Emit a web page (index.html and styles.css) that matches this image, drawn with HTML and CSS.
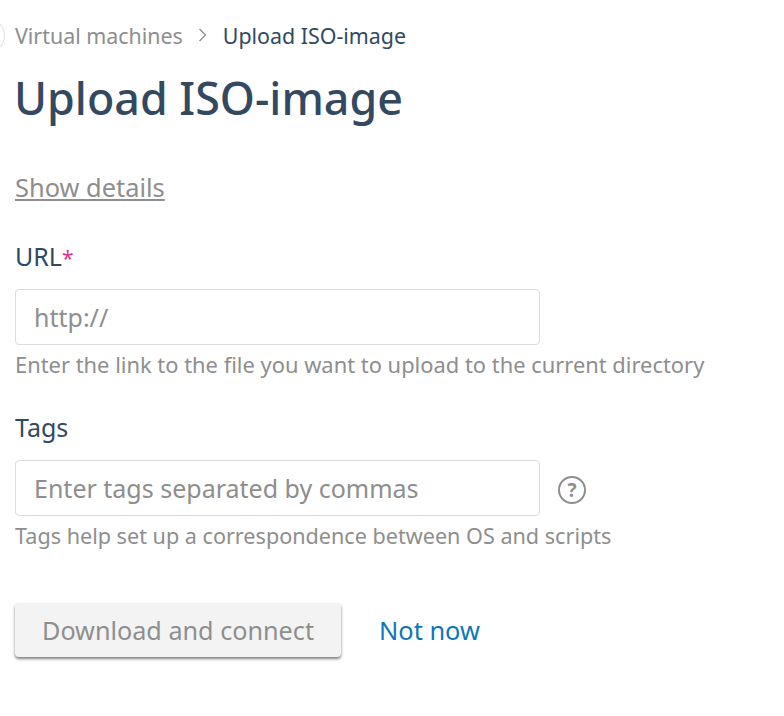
FILE: index.html
```html
<!DOCTYPE html>
<html>
<head>
<meta charset="UTF-8">
<link rel="stylesheet" href="styles.css">
</head>
<body>
<div class="back"></div>
<div class="crumbs">
  <span class="crumb-link">Virtual machines</span>
  <svg class="crumb-arrow" width="10" height="16" viewBox="0 0 10 16"><path d="M1.5 2l6 6-6 6" fill="none" stroke="#8e8e8e" stroke-width="1.3"/></svg>
  <span class="crumb-current">Upload ISO-image</span>
</div>
<h1 class="title">Upload ISO-image</h1>
<a class="details">Show details</a>
<form class="form">
  <div class="field field-url">
    <label class="label">URL<span class="req">*</span></label>
    <input class="input" type="text" placeholder="http://">
    <div class="hint">Enter the link to the file you want to upload to the current directory</div>
  </div>
  <div class="field field-tags">
    <label class="label">Tags</label>
    <div class="input-row">
      <input class="input" type="text" placeholder="Enter tags separated by commas">
      <svg class="help" width="30" height="30" viewBox="0 0 30 30"><circle cx="15" cy="15" r="13" fill="none" stroke="#8e8e8e" stroke-width="2"/><text x="15" y="21.5" text-anchor="middle" class="help-mark">?</text></svg>
    </div>
    <div class="hint hint-tags">Tags help set up a correspondence between OS and scripts</div>
  </div>
  <div class="actions">
    <button class="btn" type="button">Download and connect</button>
    <a class="later">Not now</a>
  </div>
</form>
</body>
</html>
```
FILE: styles.css
```css
html,body{height:100%}
body{margin:0;padding:0 0 0 15px;background:#fff;font-family:"Noto Sans",sans-serif;color:#2f4a62}
.back{position:absolute;left:-30px;top:18px;width:33px;height:33px;border:1px solid #dedede;border-radius:50%}
.crumbs{display:flex;align-items:center;height:24px;padding-top:23px;font-size:21.4px}
.crumb-link{color:#8e8e8e}
.crumb-arrow{margin:0 15px 0 15px}
.crumb-current{color:#2f4a62}
.title{margin:23px 0 0 -1px;height:56px;line-height:56px;font-size:44.8px;font-weight:500;color:#33495f}
.details{display:inline-block;margin-top:48px;height:26px;line-height:26px;font-size:25.4px;color:#8e8e8e;text-decoration:underline}
.form{display:block}
.field-url{margin-top:39px}
.field-tags{margin-top:34px}
.label{display:block;height:30px;line-height:30px;font-size:25px;color:#2f4a62}
.req{color:#d6368c;font-size:21px}
.input{display:block;box-sizing:border-box;width:525px;height:56px;margin-top:18px;padding:0 18px;border:1px solid #dcdcdc;border-radius:4px;font:25px "Noto Sans",sans-serif;color:#2f4a62;outline:none}
.input::placeholder{color:#8e8e8e;opacity:1}
.input-row{display:flex;align-items:center}
.help{margin:21px 0 0 17px}
.hint{margin-top:7px;height:26px;line-height:26px;font-size:21.9px;color:#8e8e8e}
.hint-tags{font-size:21.6px}
.actions{display:flex;align-items:center;margin-top:54px}
.btn{width:326px;height:54px;padding:0;border:0;border-radius:4px;background:#f3f3f3;box-shadow:0 2px 3px rgba(0,0,0,.5);font:25.2px "Noto Sans",sans-serif;color:#8e8e8e}
.later{margin-left:38px;font-size:25.4px;color:#0e76b8}
.help-mark{font:bold 19px "Noto Sans",sans-serif;fill:#8e8e8e}
```
